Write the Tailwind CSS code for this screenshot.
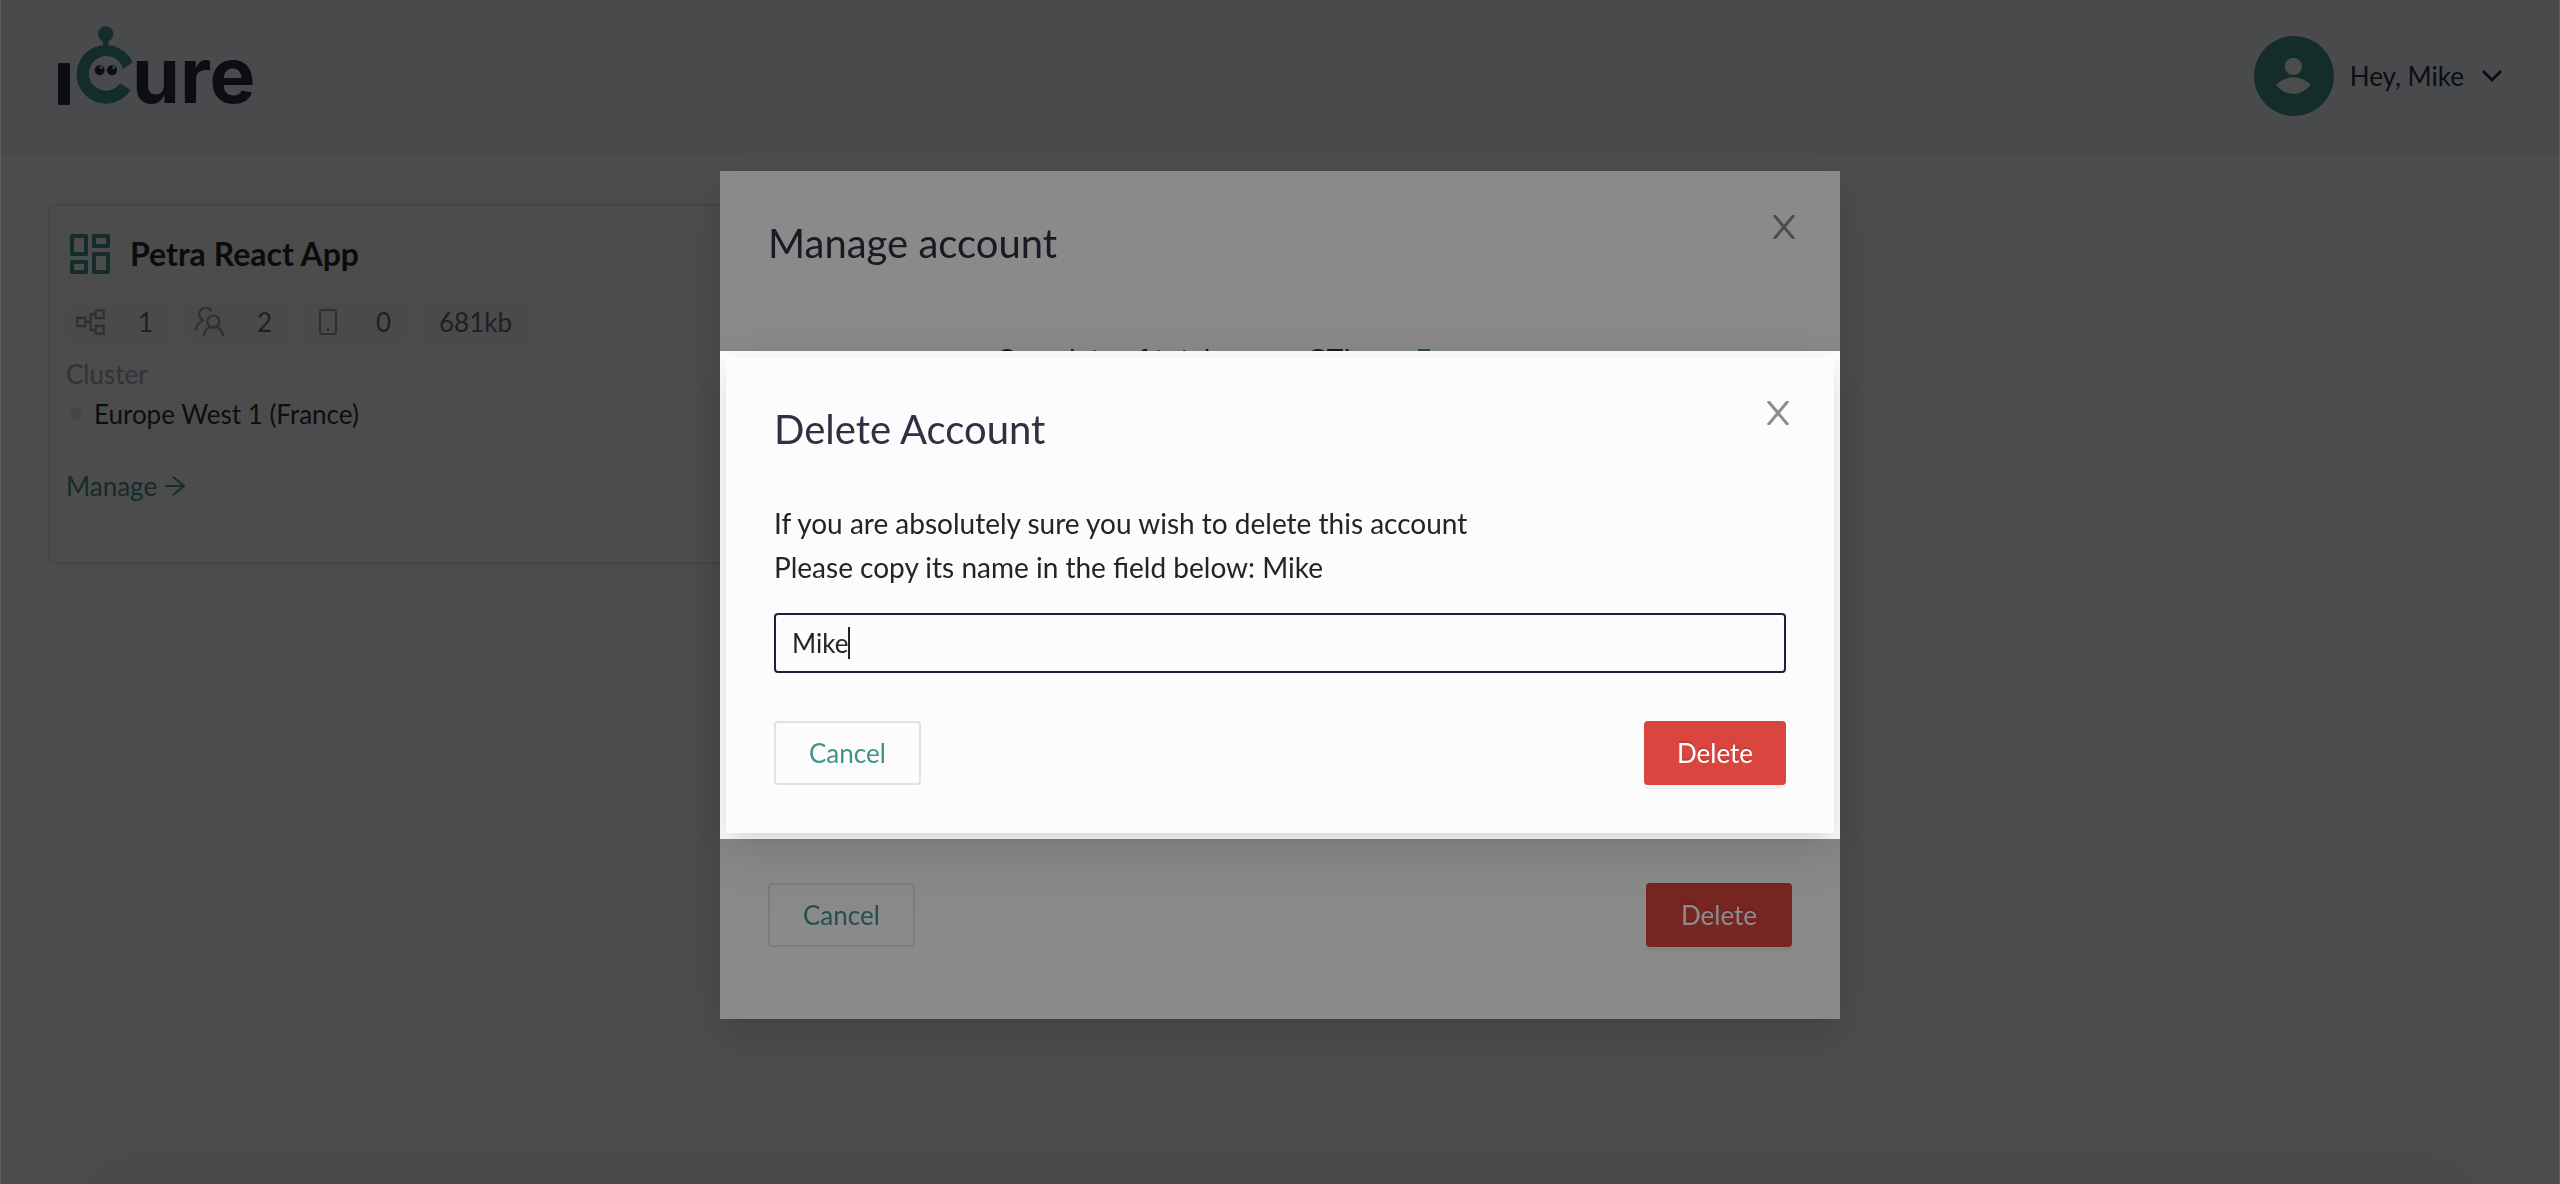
<!DOCTYPE html>
<html lang="en">
<head>
<meta charset="utf-8">
<title>iCure</title>
<script src="https://cdn.jsdelivr.net/npm/@tailwindcss/browser@4"></script>
</head>
<body class="min-h-screen overflow-hidden bg-[#fcfcfc] font-['Lato',sans-serif] text-[26px] leading-10 text-[#2d3142]">

<header class="flex h-[156px] items-start justify-between bg-[#f1f5f8] pl-[58px] pr-14">
  <a href="#" aria-label="iCure" class="mt-[26px] block">
    <svg class="h-[80px] w-[200px] overflow-visible" viewBox="0 0 200 80">
      <path d="M0 37h12v42H0z" fill="#2d3142"/>
      <g transform="scale(.33333) translate(-84 -48)">
        <path d="M308 157A88 88 0 1 0 302 240L271 220A52 52 0 1 1 279 178Z" fill="#43918d"/>
        <circle cx="227" cy="72" r="23" fill="#43918d"/>
        <path d="M219 90h16v24h-16z" fill="#43918d"/>
        <circle cx="209" cy="181" r="15" fill="#2d3142"/>
        <circle cx="246" cy="181" r="15" fill="#2d3142"/>
        <circle cx="213" cy="173" r="4" fill="#f1f5f8"/>
        <circle cx="251" cy="173" r="4" fill="#f1f5f8"/>
      </g>
      <text x="74" y="77" font-family="Inter" font-weight="700" font-size="77" fill="#2d3142">ure</text>
    </svg>
  </a>
  <button class="mt-9 flex h-20 items-center">
    <svg class="size-20" viewBox="0 0 240 240">
      <circle cx="120" cy="120" r="120" fill="#43918d"/>
      <circle cx="118" cy="91" r="26" fill="#fcfcfc"/>
      <path d="M66 147Q88 124 118 124T170 147Q146 174 118 174T66 147Z" fill="#fcfcfc"/>
    </svg>
    <span class="ml-4">Hey, Mike</span>
    <svg class="ml-4 size-6" viewBox="0 0 24 24" fill="none" stroke="#2d3142" stroke-width="3"><path d="M3 7l9 9 9-9"/></svg>
  </button>
</header>

<main class="grid grid-cols-3 gap-8 p-12">
  <article class="min-h-[360px] rounded-lg border-2 border-[#e4e6e8] px-4 pt-6">
    <div class="flex h-12 items-center gap-4">
      <svg class="size-12" viewBox="0 0 48 48" fill="none" stroke="#43918d" stroke-width="4" stroke-linejoin="round"><path d="M6 6h14v18H6zM28 6h14v10H28zM6 32h14v10H6zM28 24h14v18H28z"/></svg>
      <h2 class="text-[32px] font-bold text-[#282828]">Petra React App</h2>
    </div>
    <div class="mt-6 flex gap-4 text-[#686b72]">
      <span class="flex h-10 w-[103px] items-center justify-between rounded-lg bg-[#f1f5f8] pl-2.5 pr-4 shadow-[0_4px_0_rgba(0,0,0,0.02)]">
        <svg class="h-7 w-[30px]" viewBox="0 0 90 84" fill="none" stroke="#9b9fa5" stroke-width="7"><path d="M4 30h24v24H4zM59 7h24v23H59zM59 54h24v23H59zM28 42h16M59 18H44v48h15"/></svg>
        <span>1</span>
      </span>
      <span class="flex h-10 w-[103px] items-center justify-between rounded-lg bg-[#f1f5f8] pl-2.5 pr-4 shadow-[0_4px_0_rgba(0,0,0,0.02)]">
        <svg class="h-[30px] w-[30px]" viewBox="0 0 90 90" fill="none" stroke="#9b9fa5" stroke-width="7"><circle cx="55" cy="44" r="18"/><path d="M26 88a29 29 0 0 1 58 0M26 39A19 19 0 1 1 49 13M4 70C4 53 12 45 27 39"/></svg>
        <span>2</span>
      </span>
      <span class="flex h-10 w-[103px] items-center justify-between rounded-lg bg-[#f1f5f8] pl-2.5 pr-4 shadow-[0_4px_0_rgba(0,0,0,0.02)]">
        <svg class="h-7 w-[30px]" viewBox="0 0 90 84" fill="none" stroke="#9b9fa5" stroke-width="6"><rect x="18" y="6" width="48" height="72" rx="6"/><circle cx="42" cy="66" r="4" fill="#9b9fa5" stroke="none"/></svg>
        <span>0</span>
      </span>
      <span class="flex h-10 items-center rounded-lg bg-[#f1f5f8] px-4 shadow-[0_4px_0_rgba(0,0,0,0.02)]">681kb</span>
    </div>
    <p class="mt-3 text-[#a0aab4]">Cluster</p>
    <p class="flex items-center gap-3 pl-1"><span class="size-3 rounded-full bg-[#dde3e8]"></span>Europe West 1 (France)</p>
    <a href="#" class="mt-8 flex items-center gap-1.5 text-[#43918d]">Manage
      <svg class="size-6" viewBox="0 0 24 24" fill="none" stroke="currentColor" stroke-width="2"><path d="M2 12h19M10 3l11 9-11 9"/></svg>
    </a>
  </article>
</main>

<div class="fixed inset-0 bg-black/45"></div>
<div class="fixed inset-0 flex items-center justify-center pt-1.5">
  <section role="dialog" aria-labelledby="manage-title" class="relative flex min-h-[848px] w-[1120px] flex-col bg-[#fcfcfc] px-12 pt-12 pb-[72px] shadow-[0_12px_32px_rgba(0,0,0,0.08),0_6px_12px_-8px_rgba(0,0,0,0.12),0_18px_56px_16px_rgba(0,0,0,0.05)]">
    <h2 id="manage-title" class="text-[40px] leading-[48px]">Manage account</h2>
    <button aria-label="Close" class="absolute top-[34px] right-[34px] flex size-11 items-center justify-center text-[#8c8c8c]">
      <svg class="size-6" viewBox="0 0 24 24" fill="none" stroke="currentColor" stroke-width="3"><path d="M2 0l20 24M22 0L2 24"/></svg>
    </button>
    <p class="mt-[70px] flex pl-[228px] text-[28px] leading-[44px]"><span>Complete of total</span><span class="ml-24">GTI</span><a href="#" class="ml-16 text-[#43918d]">Free</a></p>
    <div class="mt-auto flex justify-between">
      <button class="h-16 rounded-sm border-2 border-[#dee3e8] px-[33px] text-[#43918d]">Cancel</button>
      <button class="h-16 rounded-sm border-2 border-[#d9453f] bg-[#d9453f] px-[33px] text-white shadow-[0_4px_0_rgba(0,0,0,0.045)] text-shadow-[0_-2px_0_rgba(0,0,0,0.12)]">Delete</button>
    </div>
  </section>
</div>

<div class="fixed inset-0 bg-black/45"></div>
<div class="fixed inset-0 flex items-center justify-center pt-1.5">
  <div class="w-[1120px] bg-white p-1.5">
    <section role="dialog" aria-labelledby="delete-title" class="relative bg-[#fcfcfc] p-12 shadow-[0_12px_32px_rgba(0,0,0,0.08),0_6px_12px_-8px_rgba(0,0,0,0.12),0_18px_56px_16px_rgba(0,0,0,0.05)]">
      <h2 id="delete-title" class="text-[40px] leading-[48px]">Delete Account</h2>
      <button aria-label="Close" class="absolute top-[34px] right-[34px] flex size-11 items-center justify-center text-[#8c8c8c]">
        <svg class="size-6" viewBox="0 0 24 24" fill="none" stroke="currentColor" stroke-width="3"><path d="M2 0l20 24M22 0L2 24"/></svg>
      </button>
      <label for="account-name" class="mt-12 block text-[28px] leading-[44px] text-[#242424]">If you are absolutely sure you wish to delete this account<br>Please copy its name in the field below: Mike</label>
      <div class="relative mt-6">
        <input id="account-name" type="text" value="Mike" class="block h-[60px] w-full rounded-sm border-2 border-[#1f1f38] bg-transparent px-4 text-[26px] text-[#242424] outline-none">
        <span class="absolute top-3.5 left-[74px] h-8 w-0.5 bg-[#242424]"></span>
      </div>
      <div class="mt-12 flex justify-between">
        <button class="h-16 rounded-sm border-2 border-[#dee3e8] px-[33px] text-[#43918d]">Cancel</button>
        <button class="h-16 rounded-sm bg-[#d9453f] px-[33px] text-white shadow-[0_4px_0_rgba(0,0,0,0.045)] text-shadow-[0_-2px_0_rgba(0,0,0,0.12)]">Delete</button>
      </div>
    </section>
  </div>
</div>

<div class="pointer-events-none fixed inset-0 border-x border-white/10"></div>
<div class="pointer-events-none fixed inset-x-24 -bottom-2.5 h-2 shadow-[0_0_50px_0_rgba(0,0,0,0.3)]"></div>
</body>
</html>
